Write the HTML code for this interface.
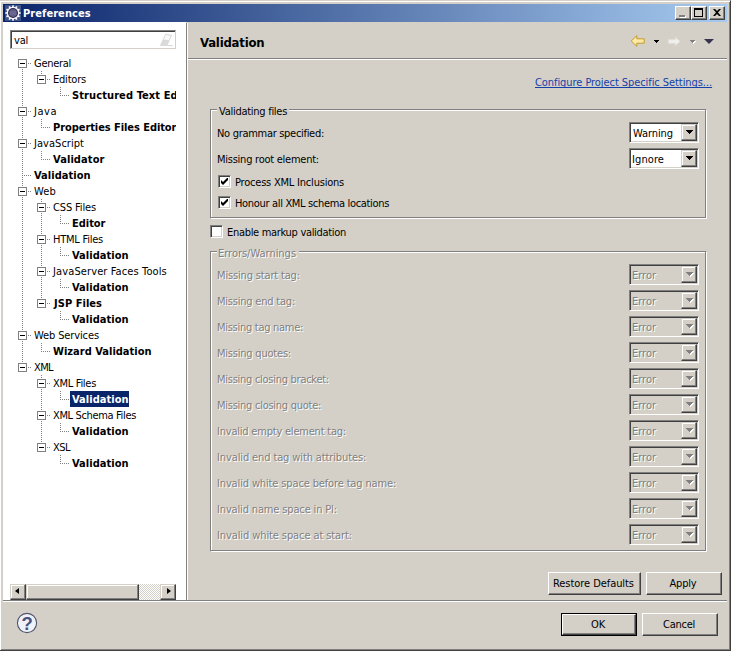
<!DOCTYPE html><html><head><meta charset="utf-8"><title>Preferences</title><style>
html,body{margin:0;padding:0;}
body{width:731px;height:652px;overflow:hidden;background:#d4d0c8;font-family:"DejaVu Sans Condensed","Liberation Sans",sans-serif;font-size:11px;color:#000;position:relative;}
*{box-sizing:border-box;}
.abs{position:absolute;}
.t{position:absolute;white-space:nowrap;line-height:13px;height:13px;margin-top:1px;}
.b{font-weight:bold;font-family:"DejaVu Sans Condensed","Liberation Sans",sans-serif;}
.dis{color:#808080;text-shadow:1px 1px 0 #fff;}
.btn{position:absolute;background:#d4d0c8;border:1px solid;border-color:#fff #404040 #404040 #fff;box-shadow:inset -1px -1px 0 #808080;}
.btn .t{left:-2px;right:0;text-align:center;}
.sb{position:absolute;background:#d4d0c8;border:1px solid;border-color:#d4d0c8 #404040 #404040 #d4d0c8;box-shadow:inset -1px -1px 0 #808080, inset 1px 1px 0 #fff;}
.combo{position:absolute;width:70px;height:21px;background:#fff;border:1px solid;border-color:#808080 #fff #fff #808080;box-shadow:inset 1px 1px 0 #404040, inset -1px -1px 0 #d4d0c8;}
.combo.d{background:#d4d0c8;}
.combo .t{left:3px;top:3px;}
.combo .ar{position:absolute;right:1px;top:1px;width:16px;height:17px;background:#d4d0c8;border:1px solid;border-color:#d4d0c8 #404040 #404040 #d4d0c8;box-shadow:inset -1px -1px 0 #808080, inset 1px 1px 0 #fff;}
.combo .ar svg{position:absolute;left:4px;top:5px;}
.grp{position:absolute;border:1px solid;border-color:#808080 #fff #fff #808080;box-shadow:inset 1px 1px 0 #fff;}
.grp:after{content:"";position:absolute;left:-1px;top:-1px;right:0;bottom:0;border:1px solid;border-color:transparent #808080 #808080 transparent;}
.chk{position:absolute;width:13px;height:13px;background:#fff;border:1px solid;border-color:#808080 #fff #fff #808080;box-shadow:inset 1px 1px 0 #404040, inset -1px -1px 0 #d4d0c8;}
.pm{position:absolute;width:9px;height:9px;border:1px solid #808080;background:#fff;}
.pm:before{content:"";position:absolute;left:1px;top:3px;width:5px;height:1px;background:#000;}
.hd{position:absolute;height:1px;background-image:linear-gradient(to right,#808080 50%,transparent 50%);background-size:2px 1px;}
.vd{position:absolute;width:1px;background-image:linear-gradient(to bottom,#808080 50%,transparent 50%);background-size:1px 2px;}
</style></head><body>
<div class="abs" style="left:-1px;top:0;width:732px;height:651px;border:1px solid;border-color:#d4d0c8 #404040 #404040 #d4d0c8;box-shadow:inset 1px 1px 0 #fff, inset -1px -1px 0 #808080;"></div>
<div class="abs" style="left:0;top:651px;width:731px;height:1px;background:#fff;"></div>
<div class="abs" style="left:3px;top:4px;width:724px;height:18px;background:linear-gradient(to right,#0a246a,#a6caf0);"></div>
<svg class="abs" style="left:5px;top:5px" width="16" height="16" viewBox="0 0 16 16"><rect width="16" height="16" fill="#8088b0" opacity="0.45"/><g fill="#f6f6fa"><rect x="7.1" y="0.4" width="1.8" height="2.6" transform="rotate(0 8 8)"/><rect x="7.1" y="0.4" width="1.8" height="2.6" transform="rotate(30 8 8)"/><rect x="7.1" y="0.4" width="1.8" height="2.6" transform="rotate(60 8 8)"/><rect x="7.1" y="0.4" width="1.8" height="2.6" transform="rotate(90 8 8)"/><rect x="7.1" y="0.4" width="1.8" height="2.6" transform="rotate(120 8 8)"/><rect x="7.1" y="0.4" width="1.8" height="2.6" transform="rotate(150 8 8)"/><rect x="7.1" y="0.4" width="1.8" height="2.6" transform="rotate(180 8 8)"/><rect x="7.1" y="0.4" width="1.8" height="2.6" transform="rotate(210 8 8)"/><rect x="7.1" y="0.4" width="1.8" height="2.6" transform="rotate(240 8 8)"/><rect x="7.1" y="0.4" width="1.8" height="2.6" transform="rotate(270 8 8)"/><rect x="7.1" y="0.4" width="1.8" height="2.6" transform="rotate(300 8 8)"/><rect x="7.1" y="0.4" width="1.8" height="2.6" transform="rotate(330 8 8)"/></g><circle cx="8" cy="8" r="6.2" fill="#f6f6fa"/><circle cx="8" cy="8" r="5" fill="#2a2744"/><circle cx="8" cy="8" r="3.9" fill="#5d5884"/><rect x="4.6" y="6.6" width="6.8" height="0.8" fill="#8480a8"/><rect x="4.6" y="8.6" width="6.8" height="0.8" fill="#8480a8"/></svg>
<div class="t b" style="left:23px;top:6px;letter-spacing:0.06px;color:#fff;">Preferences</div>
<div class="btn" style="left:675px;top:6px;width:16px;height:14px;"><div class="abs" style="left:3px;top:8px;width:6px;height:2px;background:#808080;box-shadow:1px 1px 0 #fff"></div></div>
<div class="btn" style="left:691px;top:6px;width:16px;height:14px;"><div class="abs" style="left:2px;top:1px;width:9px;height:9px;border:1px solid #000;border-top-width:2px"></div></div>
<div class="btn" style="left:709px;top:6px;width:16px;height:14px;"><svg class="abs" style="left:3px;top:2px" width="8" height="7" viewBox="0 0 8 7"><path d="M0 0h2l2 2l2-2h2l-3 3.5l3 3.5h-2l-2-2l-2 2h-2l3-3.5z" fill="#000"/></svg></div>
<div class="abs" style="left:3px;top:22px;width:183px;height:578px;background:#fff;"></div>
<div class="abs" style="left:186px;top:23px;width:2px;height:577px;border-left:1px solid #808080;border-right:1px solid #fff;"></div>
<div class="abs" style="left:10px;top:30px;width:166px;height:19px;background:#fff;border:1px solid;border-color:#808080 #d4d0c8 #d4d0c8 #808080;box-shadow:inset 1px 1px 0 #404040;"></div>
<div class="t" style="left:14px;top:33px;letter-spacing:-0.22px;">val</div>
<svg class="abs" style="left:159px;top:33px" width="16" height="14" viewBox="0 0 16 14"><path d="M6.7 1.2l5.8 1.2l-4.6 10h-6.4z" fill="#f8f8f8" stroke="#d4d4d4" stroke-width="0.9"/><path d="M4.2 6.5l5.9 0.8l-2.3 5.1h-6.2z" fill="#dadada"/><path d="M8 12.6h6" stroke="#d4d4d4" stroke-width="0.9"/></svg>
<div class="abs" style="left:0;top:0;width:176px;height:584px;overflow:hidden;">
<div class="hd" style="left:28px;top:63px;width:4px;"></div>
<div class="pm" style="left:18px;top:59px;"></div>
<div class="t" style="left:34px;top:56px;letter-spacing:-0.29px;">General</div>
<div class="hd" style="left:47px;top:79px;width:4px;"></div>
<div class="pm" style="left:37px;top:75px;"></div>
<div class="t" style="left:53px;top:72px;letter-spacing:-0.21px;">Editors</div>
<div class="hd" style="left:60px;top:95px;width:9px;"></div>
<div class="t b" style="left:72px;top:88px;letter-spacing:0.10px;">Structured Text Editors</div>
<div class="hd" style="left:28px;top:111px;width:4px;"></div>
<div class="pm" style="left:18px;top:107px;"></div>
<div class="t" style="left:34px;top:104px;letter-spacing:0.52px;">Java</div>
<div class="hd" style="left:41px;top:127px;width:9px;"></div>
<div class="t b" style="left:53px;top:120px;letter-spacing:-0.07px;">Properties Files Editor</div>
<div class="hd" style="left:28px;top:143px;width:4px;"></div>
<div class="pm" style="left:18px;top:139px;"></div>
<div class="t" style="left:34px;top:136px;letter-spacing:0.04px;">JavaScript</div>
<div class="hd" style="left:41px;top:159px;width:9px;"></div>
<div class="t b" style="left:53px;top:152px;letter-spacing:0.09px;">Validator</div>
<div class="hd" style="left:22px;top:175px;width:9px;"></div>
<div class="t b" style="left:34px;top:168px;letter-spacing:0.03px;">Validation</div>
<div class="hd" style="left:28px;top:191px;width:4px;"></div>
<div class="pm" style="left:18px;top:187px;"></div>
<div class="t" style="left:34px;top:184px;letter-spacing:0.16px;">Web</div>
<div class="hd" style="left:47px;top:207px;width:4px;"></div>
<div class="pm" style="left:37px;top:203px;"></div>
<div class="t" style="left:53px;top:200px;letter-spacing:-0.14px;">CSS Files</div>
<div class="hd" style="left:60px;top:223px;width:9px;"></div>
<div class="t b" style="left:72px;top:216px;letter-spacing:-0.03px;">Editor</div>
<div class="hd" style="left:47px;top:239px;width:4px;"></div>
<div class="pm" style="left:37px;top:235px;"></div>
<div class="t" style="left:53px;top:232px;letter-spacing:-0.23px;">HTML Files</div>
<div class="hd" style="left:60px;top:255px;width:9px;"></div>
<div class="t b" style="left:72px;top:248px;letter-spacing:0.03px;">Validation</div>
<div class="hd" style="left:47px;top:271px;width:4px;"></div>
<div class="pm" style="left:37px;top:267px;"></div>
<div class="t" style="left:53px;top:264px;letter-spacing:0.12px;">JavaServer Faces Tools</div>
<div class="hd" style="left:60px;top:287px;width:9px;"></div>
<div class="t b" style="left:72px;top:280px;letter-spacing:0.03px;">Validation</div>
<div class="hd" style="left:47px;top:303px;width:4px;"></div>
<div class="pm" style="left:37px;top:299px;"></div>
<div class="t b" style="left:54px;top:296px;letter-spacing:0.04px;">JSP Files</div>
<div class="hd" style="left:60px;top:319px;width:9px;"></div>
<div class="t b" style="left:72px;top:312px;letter-spacing:0.03px;">Validation</div>
<div class="hd" style="left:28px;top:335px;width:4px;"></div>
<div class="pm" style="left:18px;top:331px;"></div>
<div class="t" style="left:34px;top:328px;letter-spacing:-0.12px;">Web Services</div>
<div class="hd" style="left:41px;top:351px;width:9px;"></div>
<div class="t b" style="left:53px;top:344px;letter-spacing:0.01px;">Wizard Validation</div>
<div class="hd" style="left:28px;top:367px;width:4px;"></div>
<div class="pm" style="left:18px;top:363px;"></div>
<div class="t" style="left:34px;top:360px;letter-spacing:-0.61px;">XML</div>
<div class="hd" style="left:47px;top:383px;width:4px;"></div>
<div class="pm" style="left:37px;top:379px;"></div>
<div class="t" style="left:53px;top:376px;letter-spacing:-0.29px;">XML Files</div>
<div class="hd" style="left:60px;top:399px;width:9px;"></div>
<div class="abs" style="left:70px;top:391px;width:59px;height:16px;background:#0a246a;"></div>
<div class="t b" style="left:72px;top:392px;letter-spacing:0.03px;color:#fff;">Validation</div>
<div class="hd" style="left:47px;top:415px;width:4px;"></div>
<div class="pm" style="left:37px;top:411px;"></div>
<div class="t" style="left:53px;top:408px;letter-spacing:-0.35px;">XML Schema Files</div>
<div class="hd" style="left:60px;top:431px;width:9px;"></div>
<div class="t b" style="left:72px;top:424px;letter-spacing:0.03px;">Validation</div>
<div class="hd" style="left:47px;top:447px;width:4px;"></div>
<div class="pm" style="left:37px;top:443px;"></div>
<div class="t" style="left:53px;top:440px;letter-spacing:-0.53px;">XSL</div>
<div class="hd" style="left:60px;top:463px;width:9px;"></div>
<div class="t b" style="left:72px;top:456px;letter-spacing:0.03px;">Validation</div>
<div class="vd" style="left:41px;top:71px;height:3px;"></div>
<div class="vd" style="left:60px;top:87px;height:9px;"></div>
<div class="vd" style="left:22px;top:69px;height:37px;"></div>
<div class="vd" style="left:41px;top:119px;height:9px;"></div>
<div class="vd" style="left:22px;top:117px;height:21px;"></div>
<div class="vd" style="left:41px;top:151px;height:9px;"></div>
<div class="vd" style="left:22px;top:149px;height:27px;"></div>
<div class="vd" style="left:22px;top:175px;height:11px;"></div>
<div class="vd" style="left:41px;top:199px;height:3px;"></div>
<div class="vd" style="left:60px;top:215px;height:9px;"></div>
<div class="vd" style="left:41px;top:213px;height:21px;"></div>
<div class="vd" style="left:60px;top:247px;height:9px;"></div>
<div class="vd" style="left:41px;top:245px;height:21px;"></div>
<div class="vd" style="left:60px;top:279px;height:9px;"></div>
<div class="vd" style="left:41px;top:277px;height:21px;"></div>
<div class="vd" style="left:60px;top:311px;height:9px;"></div>
<div class="vd" style="left:22px;top:197px;height:133px;"></div>
<div class="vd" style="left:41px;top:343px;height:9px;"></div>
<div class="vd" style="left:22px;top:341px;height:21px;"></div>
<div class="vd" style="left:41px;top:375px;height:3px;"></div>
<div class="vd" style="left:60px;top:391px;height:9px;"></div>
<div class="vd" style="left:41px;top:389px;height:21px;"></div>
<div class="vd" style="left:60px;top:423px;height:9px;"></div>
<div class="vd" style="left:41px;top:421px;height:21px;"></div>
<div class="vd" style="left:60px;top:455px;height:9px;"></div>
</div>
<div class="abs" style="left:10px;top:584px;width:166px;height:16px;background-image:conic-gradient(#fff 25%,#d4d0c8 0 50%,#fff 0 75%,#d4d0c8 0);background-size:2px 2px;"></div>
<div class="sb" style="left:10px;top:584px;width:16px;height:16px;"><i class="abs" style="left:4px;top:3px;border-top:3.5px solid transparent;border-bottom:3.5px solid transparent;border-right:4px solid #000;"></i></div>
<div class="sb" style="left:160px;top:584px;width:16px;height:16px;"><i class="abs" style="left:6px;top:3px;border-top:3.5px solid transparent;border-bottom:3.5px solid transparent;border-left:4px solid #000;"></i></div>
<div class="sb" style="left:26px;top:584px;width:113px;height:16px;"></div>
<div class="t b" style="left:200px;top:34px;letter-spacing:-0.20px;font-size:13px;line-height:16px;height:16px;">Validation</div>
<svg class="abs" style="left:630px;top:34px" width="16" height="14" viewBox="0 0 16 14"><path d="M1.2 7l5.6-5.3v3.1h7.4v4.4h-7.4v3.1z" fill="#fdeaa4" stroke="#c49a2a" stroke-width="1" stroke-linejoin="round"/></svg>
<svg class="abs" style="left:654px;top:40px" width="5" height="3" viewBox="0 0 5 3" shape-rendering="crispEdges"><path d="M0 0h5v1h-1v1h-1v1h-1v-1h-1v-1h-1z" fill="#000"/></svg>
<svg class="abs" style="left:666px;top:34px" width="16" height="14" viewBox="0 0 16 14"><path d="M14 7.5l-4.6-4.3v2.5h-7v3.6h7v2.5z" fill="#f1f0ec" stroke="#e2e0da" stroke-width="1" stroke-linejoin="round"/></svg>
<svg class="abs" style="left:690px;top:40px" width="7" height="5" viewBox="0 0 7 5" shape-rendering="crispEdges"><path d="M1 1h5v1h-1v1h-1v1h-1v-1h-1v-1h-1z" fill="#fff"/><path d="M0 0h5v1h-1v1h-1v1h-1v-1h-1v-1h-1z" fill="#808080"/></svg>
<i class="abs" style="left:704px;top:38.5px;border-left:5.5px solid transparent;border-right:5.5px solid transparent;border-top:5.5px solid #35334e;"></i>
<div class="abs" style="left:188px;top:58px;width:539px;height:2px;border-top:1px solid #808080;border-bottom:1px solid #fff;"></div>
<div class="t" style="left:535px;top:75px;letter-spacing:-0.07px;color:#1540a8;text-decoration:underline;text-decoration-skip-ink:none;text-underline-offset:1px;text-decoration-thickness:1px;">Configure Project Specific Settings...</div>
<div class="grp" style="left:210px;top:109px;width:497px;height:110px;"></div>
<div class="abs" style="left:217px;top:109px;width:72px;height:2px;background:#d4d0c8;"></div>
<div class="t" style="left:219px;top:104px;letter-spacing:-0.27px;">Validating files</div>
<div class="t" style="left:217px;top:126px;letter-spacing:-0.30px;">No grammar specified:</div>
<div class="t" style="left:217px;top:152px;letter-spacing:-0.25px;">Missing root element:</div>
<div class="combo" style="left:629px;top:122px;">
<div class="t" style="letter-spacing:-0.09px;">Warning</div>
<div class="ar"><svg width="7" height="4" viewBox="0 0 7 4" shape-rendering="crispEdges"><path d="M0 0h7v1h-1v1h-1v1h-1v1h-1v-1h-1v-1h-1v-1h-1z" fill="#000"/></svg></div></div>
<div class="combo" style="left:629px;top:148px;">
<div class="t" style="letter-spacing:0.09px;left:2px;">Ignore</div>
<div class="ar"><svg width="7" height="4" viewBox="0 0 7 4" shape-rendering="crispEdges"><path d="M0 0h7v1h-1v1h-1v1h-1v1h-1v-1h-1v-1h-1v-1h-1z" fill="#000"/></svg></div></div>
<div class="chk" style="left:218px;top:175px;"><svg class="abs" style="left:2px;top:2px" width="7" height="7" viewBox="0 0 7 7"><path d="M0 2v3l2 2l5-5v-3l-5 5z" fill="#000"/></svg></div>
<div class="t" style="left:235px;top:175px;letter-spacing:-0.21px;">Process XML Inclusions</div>
<div class="chk" style="left:218px;top:196px;"><svg class="abs" style="left:2px;top:2px" width="7" height="7" viewBox="0 0 7 7"><path d="M0 2v3l2 2l5-5v-3l-5 5z" fill="#000"/></svg></div>
<div class="t" style="left:235px;top:196px;letter-spacing:-0.33px;">Honour all XML schema locations</div>
<div class="chk" style="left:210px;top:225px;"></div>
<div class="t" style="left:227px;top:225px;letter-spacing:-0.31px;">Enable markup validation</div>
<div class="grp" style="left:210px;top:251px;width:497px;height:301px;"></div>
<div class="abs" style="left:217px;top:251px;width:82px;height:2px;background:#d4d0c8;"></div>
<div class="t dis" style="left:218px;top:246px;letter-spacing:-0.02px;">Errors/Warnings</div>
<div class="t dis" style="left:217px;top:268px;letter-spacing:-0.16px;">Missing start tag:</div>
<div class="combo d" style="left:629px;top:264px;">
<div class="t dis" style="letter-spacing:-0.02px;left:2px;">Error</div>
<div class="ar"><svg width="8" height="5" viewBox="0 0 8 5" shape-rendering="crispEdges"><path d="M1 1h7v1h-1v1h-1v1h-1v1h-1v-1h-1v-1h-1v-1h-1z" fill="#fff"/><path d="M0 0h7v1h-1v1h-1v1h-1v1h-1v-1h-1v-1h-1v-1h-1z" fill="#808080"/></svg></div></div>
<div class="t dis" style="left:217px;top:294px;letter-spacing:-0.21px;">Missing end tag:</div>
<div class="combo d" style="left:629px;top:290px;">
<div class="t dis" style="letter-spacing:-0.02px;left:2px;">Error</div>
<div class="ar"><svg width="8" height="5" viewBox="0 0 8 5" shape-rendering="crispEdges"><path d="M1 1h7v1h-1v1h-1v1h-1v1h-1v-1h-1v-1h-1v-1h-1z" fill="#fff"/><path d="M0 0h7v1h-1v1h-1v1h-1v1h-1v-1h-1v-1h-1v-1h-1z" fill="#808080"/></svg></div></div>
<div class="t dis" style="left:217px;top:320px;letter-spacing:-0.28px;">Missing tag name:</div>
<div class="combo d" style="left:629px;top:316px;">
<div class="t dis" style="letter-spacing:-0.02px;left:2px;">Error</div>
<div class="ar"><svg width="8" height="5" viewBox="0 0 8 5" shape-rendering="crispEdges"><path d="M1 1h7v1h-1v1h-1v1h-1v1h-1v-1h-1v-1h-1v-1h-1z" fill="#fff"/><path d="M0 0h7v1h-1v1h-1v1h-1v1h-1v-1h-1v-1h-1v-1h-1z" fill="#808080"/></svg></div></div>
<div class="t dis" style="left:217px;top:346px;letter-spacing:-0.21px;">Missing quotes:</div>
<div class="combo d" style="left:629px;top:342px;">
<div class="t dis" style="letter-spacing:-0.02px;left:2px;">Error</div>
<div class="ar"><svg width="8" height="5" viewBox="0 0 8 5" shape-rendering="crispEdges"><path d="M1 1h7v1h-1v1h-1v1h-1v1h-1v-1h-1v-1h-1v-1h-1z" fill="#fff"/><path d="M0 0h7v1h-1v1h-1v1h-1v1h-1v-1h-1v-1h-1v-1h-1z" fill="#808080"/></svg></div></div>
<div class="t dis" style="left:217px;top:372px;letter-spacing:-0.27px;">Missing closing bracket:</div>
<div class="combo d" style="left:629px;top:368px;">
<div class="t dis" style="letter-spacing:-0.02px;left:2px;">Error</div>
<div class="ar"><svg width="8" height="5" viewBox="0 0 8 5" shape-rendering="crispEdges"><path d="M1 1h7v1h-1v1h-1v1h-1v1h-1v-1h-1v-1h-1v-1h-1z" fill="#fff"/><path d="M0 0h7v1h-1v1h-1v1h-1v1h-1v-1h-1v-1h-1v-1h-1z" fill="#808080"/></svg></div></div>
<div class="t dis" style="left:217px;top:398px;letter-spacing:-0.26px;">Missing closing quote:</div>
<div class="combo d" style="left:629px;top:394px;">
<div class="t dis" style="letter-spacing:-0.02px;left:2px;">Error</div>
<div class="ar"><svg width="8" height="5" viewBox="0 0 8 5" shape-rendering="crispEdges"><path d="M1 1h7v1h-1v1h-1v1h-1v1h-1v-1h-1v-1h-1v-1h-1z" fill="#fff"/><path d="M0 0h7v1h-1v1h-1v1h-1v1h-1v-1h-1v-1h-1v-1h-1z" fill="#808080"/></svg></div></div>
<div class="t dis" style="left:217px;top:424px;letter-spacing:-0.21px;">Invalid empty element tag:</div>
<div class="combo d" style="left:629px;top:420px;">
<div class="t dis" style="letter-spacing:-0.02px;left:2px;">Error</div>
<div class="ar"><svg width="8" height="5" viewBox="0 0 8 5" shape-rendering="crispEdges"><path d="M1 1h7v1h-1v1h-1v1h-1v1h-1v-1h-1v-1h-1v-1h-1z" fill="#fff"/><path d="M0 0h7v1h-1v1h-1v1h-1v1h-1v-1h-1v-1h-1v-1h-1z" fill="#808080"/></svg></div></div>
<div class="t dis" style="left:217px;top:450px;letter-spacing:-0.12px;">Invalid end tag with attributes:</div>
<div class="combo d" style="left:629px;top:446px;">
<div class="t dis" style="letter-spacing:-0.02px;left:2px;">Error</div>
<div class="ar"><svg width="8" height="5" viewBox="0 0 8 5" shape-rendering="crispEdges"><path d="M1 1h7v1h-1v1h-1v1h-1v1h-1v-1h-1v-1h-1v-1h-1z" fill="#fff"/><path d="M0 0h7v1h-1v1h-1v1h-1v1h-1v-1h-1v-1h-1v-1h-1z" fill="#808080"/></svg></div></div>
<div class="t dis" style="left:217px;top:476px;letter-spacing:-0.14px;">Invalid white space before tag name:</div>
<div class="combo d" style="left:629px;top:472px;">
<div class="t dis" style="letter-spacing:-0.02px;left:2px;">Error</div>
<div class="ar"><svg width="8" height="5" viewBox="0 0 8 5" shape-rendering="crispEdges"><path d="M1 1h7v1h-1v1h-1v1h-1v1h-1v-1h-1v-1h-1v-1h-1z" fill="#fff"/><path d="M0 0h7v1h-1v1h-1v1h-1v1h-1v-1h-1v-1h-1v-1h-1z" fill="#808080"/></svg></div></div>
<div class="t dis" style="left:217px;top:502px;letter-spacing:-0.15px;">Invalid name space in PI:</div>
<div class="combo d" style="left:629px;top:498px;">
<div class="t dis" style="letter-spacing:-0.02px;left:2px;">Error</div>
<div class="ar"><svg width="8" height="5" viewBox="0 0 8 5" shape-rendering="crispEdges"><path d="M1 1h7v1h-1v1h-1v1h-1v1h-1v-1h-1v-1h-1v-1h-1z" fill="#fff"/><path d="M0 0h7v1h-1v1h-1v1h-1v1h-1v-1h-1v-1h-1v-1h-1z" fill="#808080"/></svg></div></div>
<div class="t dis" style="left:217px;top:528px;letter-spacing:-0.10px;">Invalid white space at start:</div>
<div class="combo d" style="left:629px;top:524px;">
<div class="t dis" style="letter-spacing:-0.02px;left:2px;">Error</div>
<div class="ar"><svg width="8" height="5" viewBox="0 0 8 5" shape-rendering="crispEdges"><path d="M1 1h7v1h-1v1h-1v1h-1v1h-1v-1h-1v-1h-1v-1h-1z" fill="#fff"/><path d="M0 0h7v1h-1v1h-1v1h-1v1h-1v-1h-1v-1h-1v-1h-1z" fill="#808080"/></svg></div></div>
<div class="btn" style="left:548px;top:572px;width:93px;height:23px;">
<div class="t" style="letter-spacing:-0.06px;top:3px;">Restore Defaults</div>
</div>
<div class="btn" style="left:646px;top:572px;width:76px;height:23px;">
<div class="t" style="letter-spacing:-0.19px;top:3px;">Apply</div>
</div>
<div class="abs" style="left:3px;top:600px;width:724px;height:2px;border-top:1px solid #808080;border-bottom:1px solid #fff;"></div>
<svg class="abs" style="left:16px;top:612px" width="22" height="22" viewBox="0 0 22 22"><circle cx="11" cy="11" r="9.6" fill="#f0f2f9" stroke="#50546c" stroke-width="1.1"/><text x="11.2" y="17.6" text-anchor="middle" font-family="Liberation Sans, sans-serif" font-weight="bold" font-size="18.5" fill="#46527c">?</text></svg>
<div class="abs" style="left:561px;top:613px;width:76px;height:23px;border:1px solid #000;"></div>
<div class="btn" style="left:562px;top:614px;width:74px;height:21px;">
<div class="t" style="letter-spacing:-0.14px;top:2px;">OK</div>
</div>
<div class="btn" style="left:642px;top:613px;width:76px;height:23px;">
<div class="t" style="letter-spacing:-0.26px;top:3px;">Cancel</div>
</div>
</body></html>
